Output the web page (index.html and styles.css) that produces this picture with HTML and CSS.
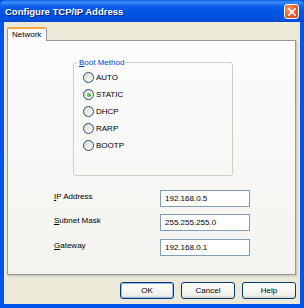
FILE: index.html
```html
<!DOCTYPE html>
<html>
<head>
<meta charset="utf-8">
<link rel="stylesheet" href="styles.css">
</head>
<body>
<div class="window">
  <div class="titlebar">
    <span class="title">Configure TCP/IP Address</span>
    <span class="close"><svg width="8" height="8" viewBox="0 0 8 8"><path d="M1 1L7 7M7 1L1 7" stroke="#fff" stroke-width="1.6" stroke-linecap="square"/></svg></span>
  </div>
  <div class="client">
    <div class="tabs">
      <div class="tab">Network</div>
    </div>
    <div class="panel">
      <fieldset class="group">
        <legend><u>B</u>oot Method</legend>
        <div class="radio"><span class="dot"></span>AUTO</div>
        <div class="radio"><span class="dot on"></span>STATIC</div>
        <div class="radio"><span class="dot"></span>DHCP</div>
        <div class="radio"><span class="dot"></span>RARP</div>
        <div class="radio"><span class="dot"></span>BOOTP</div>
      </fieldset>
      <div class="fields">
        <div class="row"><span class="label"><u>I</u>P Address</span><span class="input">192.168.0.5</span></div>
        <div class="row"><span class="label"><u>S</u>ubnet Mask</span><span class="input">255.255.255.0</span></div>
        <div class="row"><span class="label"><u>G</u>ateway</span><span class="input">192.168.0.1</span></div>
      </div>
    </div>
    <div class="buttons">
      <span class="btn def">OK</span>
      <span class="btn">Cancel</span>
      <span class="btn">Help</span>
    </div>
  </div>
</div>
</body>
</html>
```
FILE: styles.css
```css
html, body { margin: 0; padding: 0; }
body { width: 304px; height: 308px; overflow: hidden; font-family: "Liberation Sans", Arial, sans-serif; font-size: 8px; color: #000; }
.window {
  width: 304px; height: 308px; box-sizing: border-box;
  background: #0055ea;
  padding: 0 4px 4px 4px;
  display: flex; flex-direction: column;
}
.titlebar {
  height: 22px; margin: 0 -4px; padding: 0 5px 0 5px;
  display: flex; align-items: center; justify-content: space-between;
  background: linear-gradient(#0a5ce8 0%, #3d8ff7 10%, #0a5de9 30%, #0054e3 60%, #0051de 85%, #0047d6 100%);
  border-radius: 6px 6px 0 0;
}
.title { color: #fff; font-weight: bold; font-size: 9.5px; text-shadow: 1px 1px 0 #0a1e80; padding-top: 1px; }
.close {
  width: 13px; height: 13px; margin-top: 1px;
  border: 1px solid #fff; border-radius: 3px;
  background: radial-gradient(circle at 30% 30%, #f39a6e, #e25a2a 60%, #cc4418);
  display: flex; align-items: center; justify-content: center;
}
.client {
  flex: 1; background: #ece9d8;
  padding: 5px 4px 0 3px;
  display: flex; flex-direction: column;
}
.tabs { display: flex; height: 14px; position: relative; z-index: 1; }
.tab {
  width: 40px; height: 14px; box-sizing: border-box;
  border: 1px solid #919b9c; border-bottom: none;
  border-top: 2px solid #f5a63c;
  border-radius: 3px 3px 0 0;
  background: #fcfcfe;
  padding: 1px 0 0 4px; line-height: 10px;
}
.panel {
  height: 235px; box-sizing: border-box;
  border: 1px solid #919b9c;
  box-shadow: 1px 1px 0 #cdcbc0, 2px 2px 0 #dcdac9;
  background: linear-gradient(#fcfcfe, #f4f3ee);
  padding: 17px 0 0 65px;
  margin-top: -1px;
}
.group {
  margin: 0; width: 160px; height: 118px; box-sizing: border-box;
  border: 1px solid #d0d0bf; border-radius: 3px;
  padding: 2px 0 0 9px;
  position: relative;
}
.group legend {
  color: #0046d5; padding: 0 1px; margin-left: -5px; line-height: 9px;
}
.radio { height: 17px; display: flex; align-items: center; gap: 2px; }
.dot {
  width: 11px; height: 11px; box-sizing: border-box; border-radius: 50%;
  border: 1px solid #1c5180;
  background: linear-gradient(135deg, #dcd9d1, #fff);
  display: flex; align-items: center; justify-content: center;
}
.dot.on::after {
  content: ""; width: 4px; height: 4px; border-radius: 50%;
  background: radial-gradient(circle at 35% 35%, #6fd46f, #21a121);
}
.fields { margin: 14px 0 0 -19px; display: flex; flex-direction: column; gap: 7px; }
.row { display: flex; align-items: center; height: 17px; }
.row:nth-child(3) { margin-top: 1px; }
.label { width: 106px; margin-top: -5px; }
.input {
  width: 90px; height: 17px; box-sizing: border-box;
  border: 1px solid #7f9db9; background: #fff;
  padding: 0 0 0 4px; line-height: 15px;
}
.buttons { display: flex; justify-content: flex-end; gap: 7px; margin-top: 7px; }
.btn {
  width: 54px; height: 17px; box-sizing: border-box;
  border: 1px solid #003c74; border-radius: 3px;
  background: linear-gradient(#ffffff, #f0f0ea 80%, #d6d0c5);
  text-align: center; line-height: 15px;
}
.btn.def { box-shadow: inset 0 0 0 1px #9ab8f3; }
```
